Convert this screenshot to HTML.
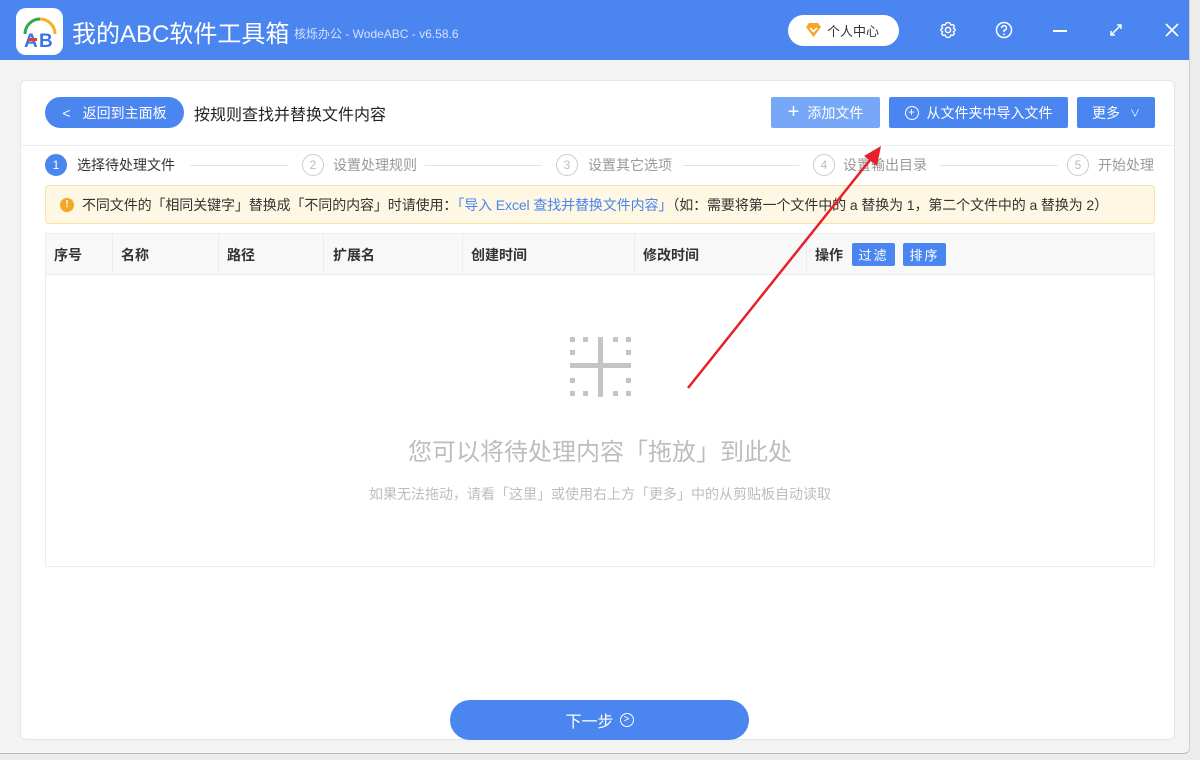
<!DOCTYPE html>
<html><head><meta charset="utf-8"><style>
*{margin:0;padding:0;box-sizing:border-box}
body{width:1200px;height:760px;overflow:hidden;background:#ececec;font-family:"Liberation Sans","Noto Sans CJK SC",sans-serif;position:relative}
.a{position:absolute}
.win{left:0;top:0;width:1190px;height:754px;background:#f3f3f3;border-radius:0 0 6px 0;overflow:hidden;border-right:1px solid #ccc;border-bottom:1px solid #bbb}
.bar{left:0;top:0;width:1190px;height:60px;background:#4b85f0}
.card{left:20px;top:80px;width:1155px;height:660px;background:#fff;border:1px solid #e6e6e6;border-radius:6px}
.btn{color:#fff;font-size:14px;display:flex;align-items:center;justify-content:center;border-radius:2px}
.circ{width:22px;height:22px;border-radius:50%;border:1px solid #ccc;color:#bbb;font-size:12px;display:flex;align-items:center;justify-content:center}
.sl{font-size:14px;color:#999;top:155px}
.line{height:1px;background:#e4e4e4;top:165px}
.th{top:245px;font-size:14px;color:#333;font-weight:bold}
.vl{top:234px;width:1px;height:41px;background:#ececec}
</style></head><body>
<div class="a win">
<div class="a bar"></div>
<div class="a" style="left:16px;top:8px;width:47px;height:47px;background:#fff;border-radius:10px"></div>
<svg class="a" style="left:16px;top:8px" width="47" height="47" viewBox="0 0 47 47">
<path d="M9 26 A15 15 0 0 1 24 11" stroke="#2fa84f" stroke-width="3" fill="none"/>
<path d="M24 11 A15 15 0 0 1 39 26" stroke="#f2b21c" stroke-width="3" fill="none"/>
<text x="8" y="39" font-size="19" font-weight="bold" fill="#3b73e8" font-family="Liberation Sans">A</text>
<text x="23" y="39" font-size="19" font-weight="bold" fill="#3b73e8" font-family="Liberation Sans">B</text>
<rect x="12" y="30" width="9" height="3" fill="#e53935"/>
</svg>
<div class="a" style="left:72px;top:14px;font-size:24px;color:#fff">我的ABC软件工具箱</div>
<div class="a" style="left:294px;top:25px;font-size:12px;color:#d5e2ff">核烁办公 - WodeABC - v6.58.6</div>
<div class="a" style="left:788px;top:15px;width:111px;height:31px;background:#fff;border-radius:16px"></div>
<svg class="a" style="left:805px;top:22px" width="17" height="16" viewBox="0 0 17 16"><path d="M1 5 L4 1 H13 L16 5 L8.5 15 Z" fill="#f5a623"/><path d="M5 6 L8.5 9.5 L12 6" stroke="#fff" stroke-width="1.6" fill="none"/></svg>
<div class="a" style="left:827px;top:21px;font-size:13px;color:#333">个人中心</div>
<svg class="a" style="left:938px;top:20px" width="20" height="20" viewBox="0 0 20 20"><circle cx="10" cy="10" r="2.6" fill="none" stroke="#fff" stroke-width="1.5"/><path d="M10 2.5 L12 3 L12.8 5 L15 4.6 L16.4 6.2 L15.4 8.2 L17.5 10 L15.4 11.8 L16.4 13.8 L15 15.4 L12.8 15 L12 17 L10 17.5 L8 17 L7.2 15 L5 15.4 L3.6 13.8 L4.6 11.8 L2.5 10 L4.6 8.2 L3.6 6.2 L5 4.6 L7.2 5 L8 3 Z" fill="none" stroke="#fff" stroke-width="1.4" stroke-linejoin="round"/></svg>
<svg class="a" style="left:994px;top:20px" width="20" height="20" viewBox="0 0 20 20"><circle cx="10" cy="10" r="7.5" fill="none" stroke="#fff" stroke-width="1.5"/><path d="M7.6 8 A2.4 2.4 0 1 1 10 10.4 V12" fill="none" stroke="#fff" stroke-width="1.5"/><circle cx="10" cy="14.3" r="0.9" fill="#fff"/></svg>
<div class="a" style="left:1053px;top:30px;width:14px;height:2px;background:#fff"></div>
<svg class="a" style="left:1108px;top:22px" width="16" height="16" viewBox="0 0 16 16"><path d="M3 13 L13 3 M9 3 H13 V7 M3 9 V13 H7" stroke="#fff" stroke-width="1.5" fill="none"/></svg>
<svg class="a" style="left:1164px;top:22px" width="16" height="16" viewBox="0 0 16 16"><path d="M2 2 L14 14 M14 2 L2 14" stroke="#fff" stroke-width="1.6"/></svg>

<div class="a card"></div>
<div class="a" style="left:21px;top:145px;width:1153px;height:1px;background:#eee"></div>
<div class="a btn" style="left:45px;top:97px;width:139px;height:31px;border-radius:16px;background:#4b85f0;font-size:14px"><span style="margin-right:12px;font-size:14px">&lt;</span>返回到主面板</div>
<div class="a" style="left:194px;top:101px;font-size:16px;color:#222">按规则查找并替换文件内容</div>
<div class="a btn" style="left:771px;top:97px;width:109px;height:31px;background:#76a8f7"><span style="font-size:20px;margin-right:8px;font-weight:300">+</span>添加文件</div>
<div class="a btn" style="left:889px;top:97px;width:179px;height:31px;background:#4b85f0"><span style="display:inline-block;width:14px;height:14px;border:1.3px solid #fff;border-radius:50%;font-size:12px;line-height:11px;text-align:center;margin-right:8px">+</span>从文件夹中导入文件</div>
<div class="a btn" style="left:1077px;top:97px;width:78px;height:31px;background:#4b85f0">更多<span style="font-size:10px;margin-left:10px">∨</span></div>

<div class="a circ" style="left:45px;top:154px;background:#4b85f0;border-color:#4b85f0;color:#fff">1</div>
<div class="a sl" style="left:77px;color:#333">选择待处理文件</div>
<div class="a line" style="left:190px;width:98px"></div>
<div class="a circ" style="left:302px;top:154px">2</div>
<div class="a sl" style="left:333px">设置处理规则</div>
<div class="a line" style="left:425px;width:117px"></div>
<div class="a circ" style="left:556px;top:154px">3</div>
<div class="a sl" style="left:588px">设置其它选项</div>
<div class="a line" style="left:683px;width:116px"></div>
<div class="a circ" style="left:813px;top:154px">4</div>
<div class="a sl" style="left:843px">设置输出目录</div>
<div class="a line" style="left:940px;width:118px"></div>
<div class="a circ" style="left:1067px;top:154px">5</div>
<div class="a sl" style="left:1098px">开始处理</div>

<div class="a" style="left:45px;top:185px;width:1110px;height:39px;background:#fdf7e3;border:1px solid #f6e3a4;border-radius:4px"></div>
<div class="a" style="left:60px;top:198px;width:14px;height:14px;border-radius:50%;background:#f5a623;color:#fff;font-size:10px;font-weight:bold;text-align:center;line-height:14px">!</div>
<div class="a" style="left:82px;top:195px;font-size:14px;color:#333;white-space:nowrap;letter-spacing:-0.1px">不同文件的「相同关键字」替换成「不同的内容」时请使用：<span style="color:#4b85f0">「导入 Excel 查找并替换文件内容」</span>（如：需要将第一个文件中的 a 替换为 1，第二个文件中的 a 替换为 2）</div>

<div class="a" style="left:45px;top:233px;width:1110px;height:334px;border:1px solid #ececec;background:#fff"></div>
<div class="a" style="left:46px;top:234px;width:1108px;height:41px;background:#f8f8f8;border-bottom:1px solid #ececec"></div>
<div class="a vl" style="left:112px"></div><div class="a vl" style="left:218px"></div><div class="a vl" style="left:323px"></div><div class="a vl" style="left:462px"></div><div class="a vl" style="left:634px"></div><div class="a vl" style="left:806px"></div>
<div class="a th" style="left:54px">序号</div><div class="a th" style="left:121px">名称</div><div class="a th" style="left:227px">路径</div><div class="a th" style="left:333px">扩展名</div><div class="a th" style="left:471px">创建时间</div><div class="a th" style="left:643px">修改时间</div><div class="a th" style="left:815px">操作</div>
<div class="a btn" style="left:852px;top:243px;width:43px;height:23px;font-size:13px;background:#4b85f0;letter-spacing:2px">过滤</div>
<div class="a btn" style="left:903px;top:243px;width:43px;height:23px;font-size:13px;background:#4b85f0;letter-spacing:2px">排序</div>

<svg class="a" style="left:570px;top:337px" width="61" height="60" viewBox="0 0 61 60" fill="#c4c4c4">
<rect x="0" y="0" width="5" height="5"/><rect x="13" y="0" width="5" height="5"/><rect x="43" y="0" width="5" height="5"/><rect x="56" y="0" width="5" height="5"/>
<rect x="0" y="13" width="5" height="5"/><rect x="56" y="13" width="5" height="5"/>
<rect x="0" y="41" width="5" height="5"/><rect x="56" y="41" width="5" height="5"/>
<rect x="0" y="54" width="5" height="5"/><rect x="13" y="54" width="5" height="5"/><rect x="43" y="54" width="5" height="5"/><rect x="56" y="54" width="5" height="5"/>
<rect x="28" y="0" width="5" height="60"/><rect x="0" y="26" width="61" height="5"/>
</svg>
<div class="a" style="left:300px;width:600px;text-align:center;top:432px;font-size:24px;color:#bdbdbd">您可以将待处理内容「拖放」到此处</div>
<div class="a" style="left:300px;width:600px;text-align:center;top:484px;font-size:14px;color:#bdbdbd">如果无法拖动，请看「这里」或使用右上方「更多」中的从剪贴板自动读取</div>

<div class="a btn" style="left:450px;top:700px;width:299px;height:40px;border-radius:20px;background:#4b85f0;font-size:16px">下一步 <span style="display:inline-block;width:14px;height:14px;border:1.3px solid #fff;border-radius:50%;font-size:10px;line-height:11px;text-align:center;margin-left:6px">&gt;</span></div>

<svg class="a" style="left:0;top:0" width="1190" height="760"><line x1="688" y1="388" x2="874" y2="155" stroke="#e8202a" stroke-width="2.5"/><path d="M881 146 L877 166 L864 156 Z" fill="#e8202a"/></svg>
</div>
</body></html>
